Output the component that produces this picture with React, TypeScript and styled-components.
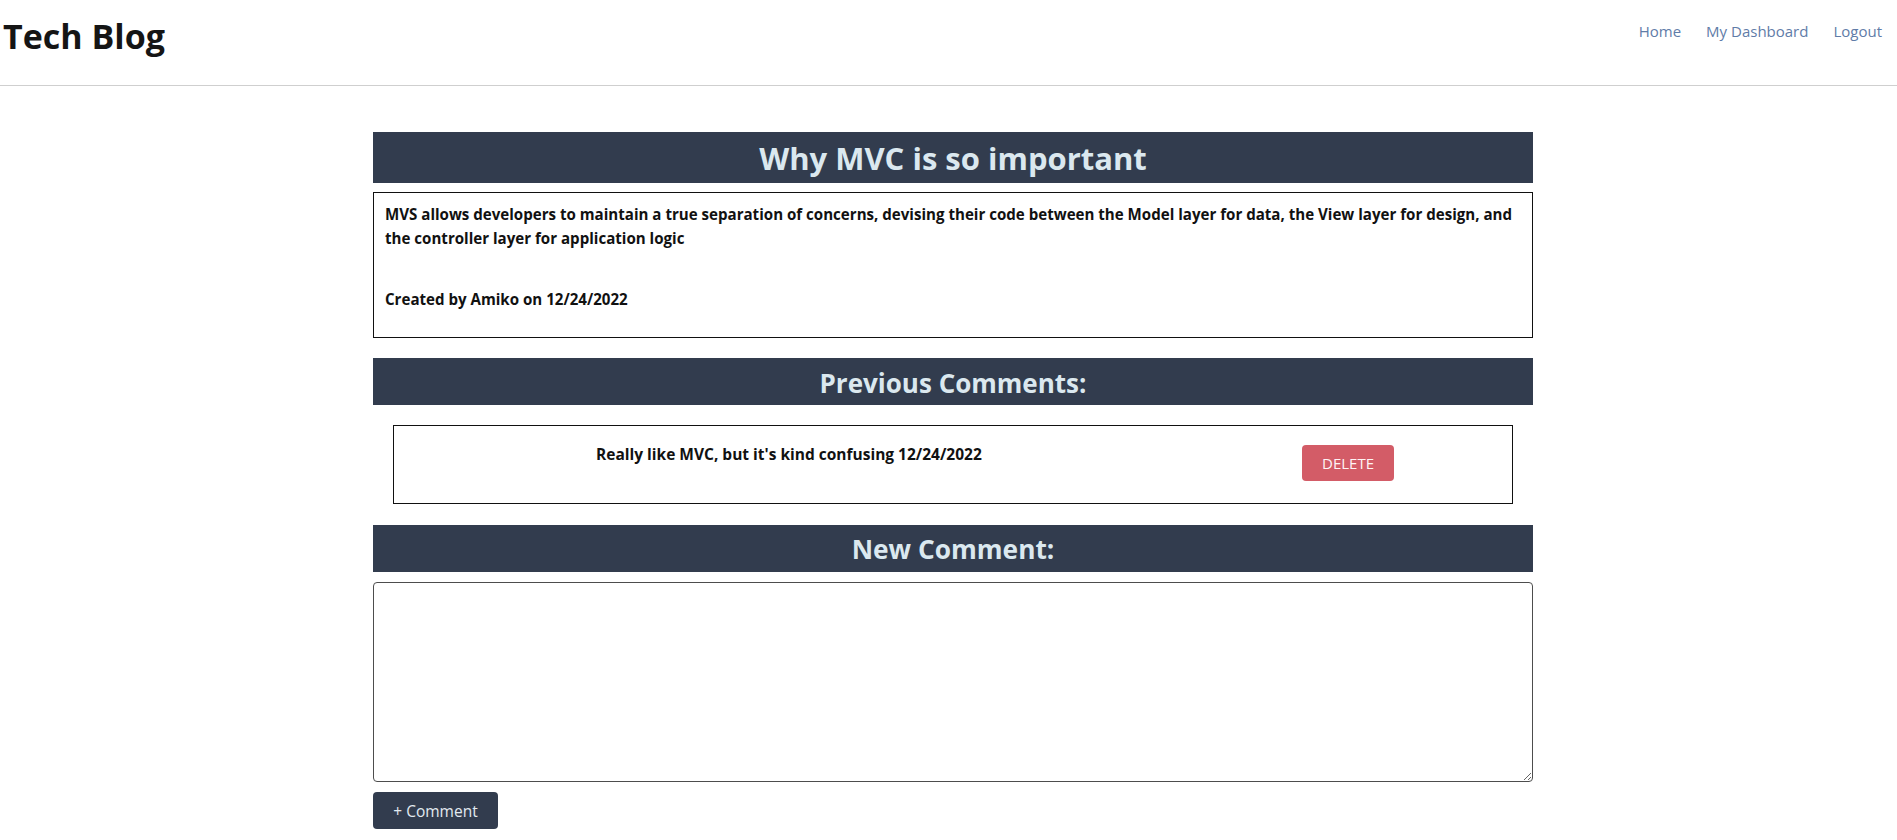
import React from "react";
import styled, { createGlobalStyle } from "styled-components";

const GlobalStyle = createGlobalStyle`
  * { box-sizing: border-box; }
  html, body { margin: 0; padding: 0; background: #ffffff; }
  body {
    font-family: "Open Sans", "Noto Sans", sans-serif;
    color: #111111;
  }
`;

const Header = styled.header`
  height: 86px;
  border-bottom: 1px solid #cfcfcf;
  display: flex;
  justify-content: space-between;
  align-items: flex-start;
  padding: 0 6px 0 3px;
`;

const Brand = styled.h1`
  margin: 19px 0 0;
  font-size: 34px;
  line-height: 1;
  font-weight: 700;
  color: #151515;
`;

const Nav = styled.nav`
  display: flex;
  margin-top: 11px;
`;

const NavLink = styled.a`
  display: block;
  padding: 8px 9px;
  margin-left: 7px;
  font-size: 15px;
  line-height: 24px;
  color: #5f7ca8;
  text-decoration: none;
  cursor: pointer;
`;

const Page = styled.main`
  padding-left: 9px;
  padding-top: 46px;
`;

const Container = styled.div`
  width: 1160px;
  margin: 0 auto;
  display: flex;
  flex-direction: column;
`;

const Bar = styled.h2<{ $size: number; $height: number; $gap: number }>`
  margin: ${(p) => p.$gap}px 0 0;
  height: ${(p) => p.$height}px;
  background: #323c4e;
  color: #dbe8ef;
  font-size: ${(p) => p.$size}px;
  font-weight: 700;
  line-height: 1;
  display: flex;
  align-items: center;
  justify-content: center;
  padding-top: 2px;
`;

const PostBox = styled.section`
  margin-top: 9px;
  height: 146px;
  border: 1px solid #111111;
  padding: 9px 11px 0;
`;

const Text = styled.p<{ $after?: number; $size?: number }>`
  margin: 0 0 ${(p) => p.$after ?? 0}px;
  font-size: ${(p) => p.$size ?? 15.5}px;
  line-height: 24px;
  font-weight: 700;
  color: #111111;
`;

const CommentBox = styled.div`
  margin: 20px 20px 0;
  height: 79px;
  border: 1px solid #111111;
  padding: 16px 118px 0 202px;
  display: flex;
  justify-content: space-between;
  align-items: flex-start;
`;

const DeleteButton = styled.button`
  margin-top: 3px;
  width: 92px;
  height: 36px;
  border: none;
  border-radius: 4px;
  background: #d35c67;
  color: #fff4f5;
  font-family: "Open Sans", "Noto Sans", sans-serif;
  font-size: 15px;
  text-transform: uppercase;
  cursor: pointer;
`;

const TextArea = styled.textarea`
  margin-top: 10px;
  width: 100%;
  height: 200px;
  border: 1px solid #4d4d4d;
  border-radius: 4px;
  padding: 6px;
  font-family: "Open Sans", "Noto Sans", sans-serif;
  font-size: 15px;
`;

const SubmitButton = styled.button`
  margin-top: 10px;
  align-self: flex-start;
  width: 125px;
  height: 37px;
  border: none;
  border-radius: 4px;
  background: #323c4e;
  color: #e2eaf0;
  font-family: "Open Sans", "Noto Sans", sans-serif;
  font-size: 15.5px;
  cursor: pointer;
`;

export default function App() {
  return (
    <>
      <GlobalStyle />
      <Header>
        <Brand>Tech Blog</Brand>
        <Nav>
          <NavLink>Home</NavLink>
          <NavLink>My Dashboard</NavLink>
          <NavLink>Logout</NavLink>
        </Nav>
      </Header>
      <Page>
        <Container>
          <Bar $size={31} $height={51} $gap={0}>Why MVC is so important</Bar>
          <PostBox>
            <Text $after={37} $size={15.1}>
              MVS allows developers to maintain a true separation of concerns, devising their code between the Model layer for data, the View layer for design, and the controller layer for application logic
            </Text>
            <Text $size={15.1}>Created by Amiko on 12/24/2022</Text>
          </PostBox>
          <Bar $size={26} $height={47} $gap={20}>Previous Comments:</Bar>
          <CommentBox>
            <Text>Really like MVC, but it's kind confusing 12/24/2022</Text>
            <DeleteButton>Delete</DeleteButton>
          </CommentBox>
          <Bar $size={26.3} $height={47} $gap={21}>New Comment:</Bar>
          <TextArea />
          <SubmitButton>+ Comment</SubmitButton>
        </Container>
      </Page>
    </>
  );
}
